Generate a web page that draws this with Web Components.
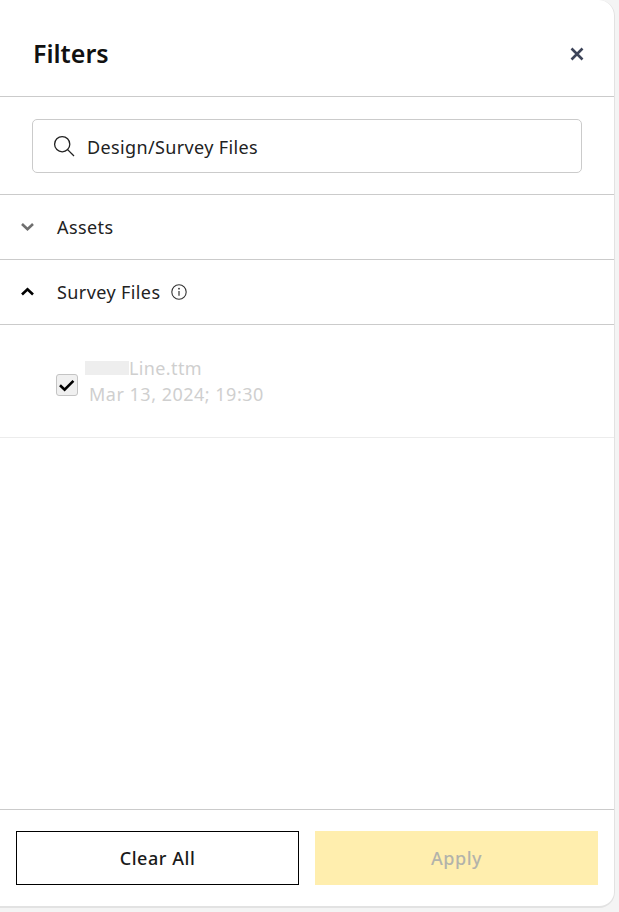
<!DOCTYPE html>
<html>
<head>
<meta charset="utf-8">
<style>
  html, body { margin: 0; padding: 0; height: 100%; background: #f4f4f4; }
  body { font-family: "Noto Sans", "Open Sans", sans-serif; color: #1a1a1a; }
</style>
</head>
<body>
<filter-panel>
  <filter-header slot="header">Filters</filter-header>
  <filter-search slot="search" value="Design/Survey Files"></filter-search>
  <filter-section label="Assets"></filter-section>
  <filter-section label="Survey Files" open info></filter-section>
  <file-item name="Line.ttm" date="Mar 13, 2024; 19:30"></file-item>
  <filter-footer slot="footer"></filter-footer>
</filter-panel>

<script>
class FilterPanel extends HTMLElement {
  constructor() {
    super();
    this.attachShadow({ mode: 'open' });
    this.shadowRoot.innerHTML = `
      <style>
        :host {
          display: flex;
          flex-direction: column;
          box-sizing: border-box;
          width: 615px;
          height: 908px;
          background: #fff;
          border-right: 1px solid #e2e2e2;
          border-bottom: 2px solid #e2e2e2;
          border-radius: 0 16px 16px 0;
        }
        .body { flex: 1; display: flex; flex-direction: column; }
      </style>
      <slot name="header"></slot>
      <slot name="search"></slot>
      <div class="body"><slot></slot></div>
      <slot name="footer"></slot>
    `;
  }
}

class FilterHeader extends HTMLElement {
  constructor() {
    super();
    this.attachShadow({ mode: 'open' });
    this.shadowRoot.innerHTML = `
      <style>
        :host {
          display: flex;
          align-items: center;
          justify-content: space-between;
          box-sizing: border-box;
          height: 97px;
          padding: 12px 30px 0 33px;
          border-bottom: 1px solid #cbcbcb;
        }
        h1 { margin: -2px 0 0; font-size: 25px; line-height: 32px; font-weight: 600; color: #111; }
        svg { display: block; }
      </style>
      <h1><slot></slot></h1>
      <svg width="14" height="14" viewBox="0 0 14 14">
        <path d="M1.5 1.5 12.5 12.5M12.5 1.5 1.5 12.5" stroke="#3d4459" stroke-width="2.6" fill="none"/>
      </svg>
    `;
  }
}

class FilterSearch extends HTMLElement {
  constructor() {
    super();
    this.attachShadow({ mode: 'open' });
    this.shadowRoot.innerHTML = `
      <style>
        :host {
          display: block;
          box-sizing: border-box;
          height: 98px;
          padding: 22px 32px 21px 32px;
          border-bottom: 1px solid #cbcbcb;
        }
        .box {
          display: flex;
          align-items: center;
          gap: 12px;
          box-sizing: border-box;
          height: 54px;
          padding: 0 20px;
          border: 1px solid #cbcbcb;
          border-radius: 5px;
          font-size: 18px;
          letter-spacing: .37px;
          color: #222;
        }
        svg { display: block; flex: none; }
        span { padding-top: 2px; }
      </style>
      <div class="box">
        <svg width="22" height="22" viewBox="0 0 22 22" fill="none" stroke="#222" stroke-width="1.3">
          <circle cx="9.2" cy="9.2" r="7.6"/>
          <path d="M14.6 14.6 21 21"/>
        </svg>
        <span>${this.getAttribute('value')}</span>
      </div>
    `;
  }
}

class FilterSection extends HTMLElement {
  constructor() {
    super();
    this.attachShadow({ mode: 'open' });
    const open = this.hasAttribute('open');
    const chevron = open
      ? '<path d="M2 8.5 7.5 3.2 13 8.5" stroke="#000"/>'
      : '<path d="M2 3 7.5 8.3 13 3" stroke="#6f6f6f"/>';
    const info = this.hasAttribute('info') ? `
      <svg class="info" width="16" height="16" viewBox="0 0 16 16" fill="none">
        <circle cx="8" cy="8" r="7.2" stroke="#333" stroke-width="1.1"/>
        <path d="M8 7v4.8" stroke="#333" stroke-width="1.2"/>
        <circle cx="8" cy="4.7" r=".9" fill="#333"/>
      </svg>` : '';
    this.shadowRoot.innerHTML = `
      <style>
        :host {
          display: flex;
          align-items: center;
          box-sizing: border-box;
          height: 65px;
          padding-left: 20px;
          border-bottom: 1px solid #cbcbcb;
          font-size: 18px;
          letter-spacing: .4px;
          color: #222;
        }
        .chev { display: block; flex: none; margin-right: 22px; }
        .info { display: block; flex: none; margin-left: 11px; }
      </style>
      <svg class="chev" width="15" height="12" viewBox="0 0 15 12" fill="none" stroke-width="2.6">${chevron}</svg>
      <span>${this.getAttribute('label')}</span>
      ${info}
    `;
  }
}

class FileItem extends HTMLElement {
  constructor() {
    super();
    this.attachShadow({ mode: 'open' });
    this.shadowRoot.innerHTML = `
      <style>
        :host {
          display: flex;
          align-items: center;
          box-sizing: border-box;
          height: 113px;
          padding: 0 0 0 56px;
          border-bottom: 1px solid #ececec;
          color: #cfcfcf;
          font-size: 18px;
          line-height: 26px;
          letter-spacing: .37px;
        }
        .check {
          box-sizing: border-box;
          flex: none;
          width: 22px;
          height: 22px;
          margin: 8px 7px 0 0;
          background: #f0f0f0;
          border: 1px solid #c4c4c4;
          border-radius: 3px;
        }
        .check svg { display: block; }
        .name { display: flex; align-items: center; }
        .blur { display: block; width: 44px; height: 14px; background: #eeeeee; }
        .date { margin-left: 4px; font-weight: 400; letter-spacing: .5px; }
      </style>
      <div class="check">
        <svg width="20" height="20" viewBox="0 0 20 20" fill="none">
          <path d="M3 10.2 7.6 14.6 16.4 5.8" stroke="#000" stroke-width="2.6"/>
        </svg>
      </div>
      <div>
        <div class="name"><span class="blur"></span><span>${this.getAttribute('name')}</span></div>
        <div class="date">${this.getAttribute('date')}</div>
      </div>
    `;
  }
}

class FilterFooter extends HTMLElement {
  constructor() {
    super();
    this.attachShadow({ mode: 'open' });
    this.shadowRoot.innerHTML = `
      <style>
        :host {
          display: grid;
          grid-template-columns: 283px 283px;
          gap: 16px;
          box-sizing: border-box;
          height: 97px;
          padding: 21px 16px 0;
          border-top: 1px solid #cbcbcb;
        }
        button {
          box-sizing: border-box;
          height: 54px;
          font-family: inherit;
          font-size: 18px;
          font-weight: 500;
          letter-spacing: .55px;
          border-radius: 0;
          padding: 0;
        }
        .clear { background: #fff; border: 1px solid #000; color: #1a1a1a; }
        .apply { background: #ffeeae; border: 0; color: #b3b3ab; }
      </style>
      <button class="clear">Clear All</button>
      <button class="apply" disabled>Apply</button>
    `;
  }
}

customElements.define('filter-panel', FilterPanel);
customElements.define('filter-header', FilterHeader);
customElements.define('filter-search', FilterSearch);
customElements.define('filter-section', FilterSection);
customElements.define('file-item', FileItem);
customElements.define('filter-footer', FilterFooter);
</script>
</body>
</html>
